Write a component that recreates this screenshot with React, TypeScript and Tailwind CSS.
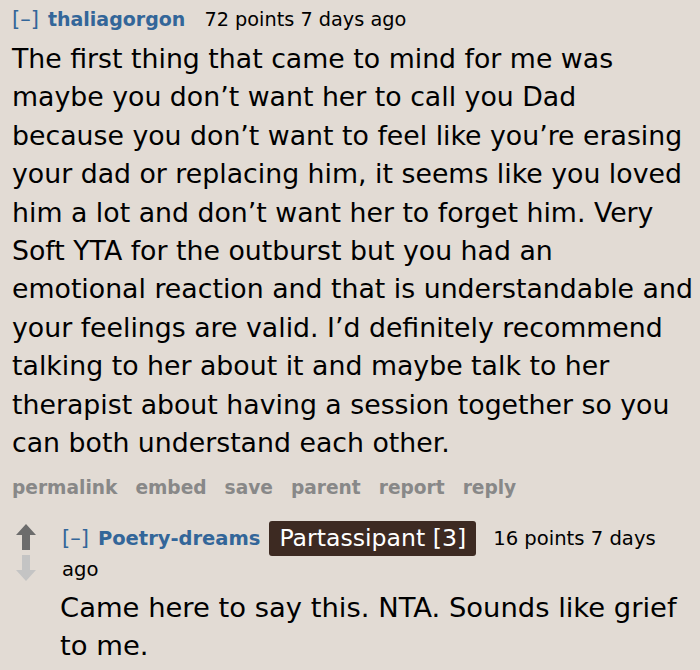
import React from "react";

const lines1 = [
  "The first thing that came to mind for me was",
  "maybe you don\u2019t want her to call you Dad",
  "because you don\u2019t want to feel like you\u2019re erasing",
  "your dad or replacing him, it seems like you loved",
  "him a lot and don\u2019t want her to forget him. Very",
  "Soft YTA for the outburst but you had an",
  "emotional reaction and that is understandable and",
  "your feelings are valid. I\u2019d definitely recommend",
  "talking to her about it and maybe talk to her",
  "therapist about having a session together so you",
  "can both understand each other.",
];

export default function App() {
  return (
    <div
      className="w-[700px] h-[670px] overflow-hidden bg-[#e2dbd4] text-black"
      style={{ fontFamily: '"DejaVu Sans", Verdana, sans-serif' }}
    >
      <div className="pl-[12px] pt-[6px]">
        <div className="flex items-baseline leading-[26px] h-[28px]">
          <span className="text-[21px] text-[#336699]">[&#8211;]</span>
          <span className="ml-[9px] text-[19px] font-bold text-[#336699]">thaliagorgon</span>
          <span className="ml-[19px] text-[19.3px]">72 points 7 days ago</span>
        </div>
        <div className="mt-[6px] text-[26.75px] leading-[38.4px]">
          {lines1.map((l, i) => (
            <div key={i} className="whitespace-nowrap">
              {l}
            </div>
          ))}
        </div>
        <div className="mt-[12px] flex gap-[18px] text-[18.6px] leading-[28px] font-bold text-[#888888]">
          <span>permalink</span>
          <span>embed</span>
          <span>save</span>
          <span>parent</span>
          <span>report</span>
          <span>reply</span>
        </div>
      </div>
      <div className="mt-[19px] flex pl-[16px]">
        <div className="flex flex-col items-center w-[20px] gap-[5px] pt-[3px]">
          <svg width="20" height="26" viewBox="0 0 20 26">
            <path d="M10 0 L20 11 L14 11 L14 26 L6 26 L6 11 L0 11 Z" fill="#6c6c6c" />
          </svg>
          <svg width="20" height="26" viewBox="0 0 20 26">
            <path d="M6 0 L14 0 L14 15 L20 15 L10 26 L0 15 L6 15 Z" fill="#c4c4c4" />
          </svg>
        </div>
        <div className="ml-[26px]">
          <div className="flex flex-wrap items-center">
            <span className="text-[21px] text-[#336699]">[&#8211;]</span>
            <span className="ml-[9px] text-[19.5px] font-bold text-[#336699]">Poetry-dreams</span>
            <span className="ml-[9px] bg-[#3d2a22] text-white rounded-[3px] px-[10px] h-[35px] flex items-center text-[23.6px]">
              Partassipant [3]
            </span>
            <span className="ml-[17px] text-[19.6px]">16 points 7 days</span>
          </div>
          <div className="text-[19.6px] leading-[27px]">ago</div>
          <div className="mt-[6px] -ml-[2px] text-[27.4px] leading-[38px]">
            <div className="whitespace-nowrap">Came here to say this. NTA. Sounds like grief</div>
            <div className="whitespace-nowrap">to me.</div>
          </div>
        </div>
      </div>
    </div>
  );
}
